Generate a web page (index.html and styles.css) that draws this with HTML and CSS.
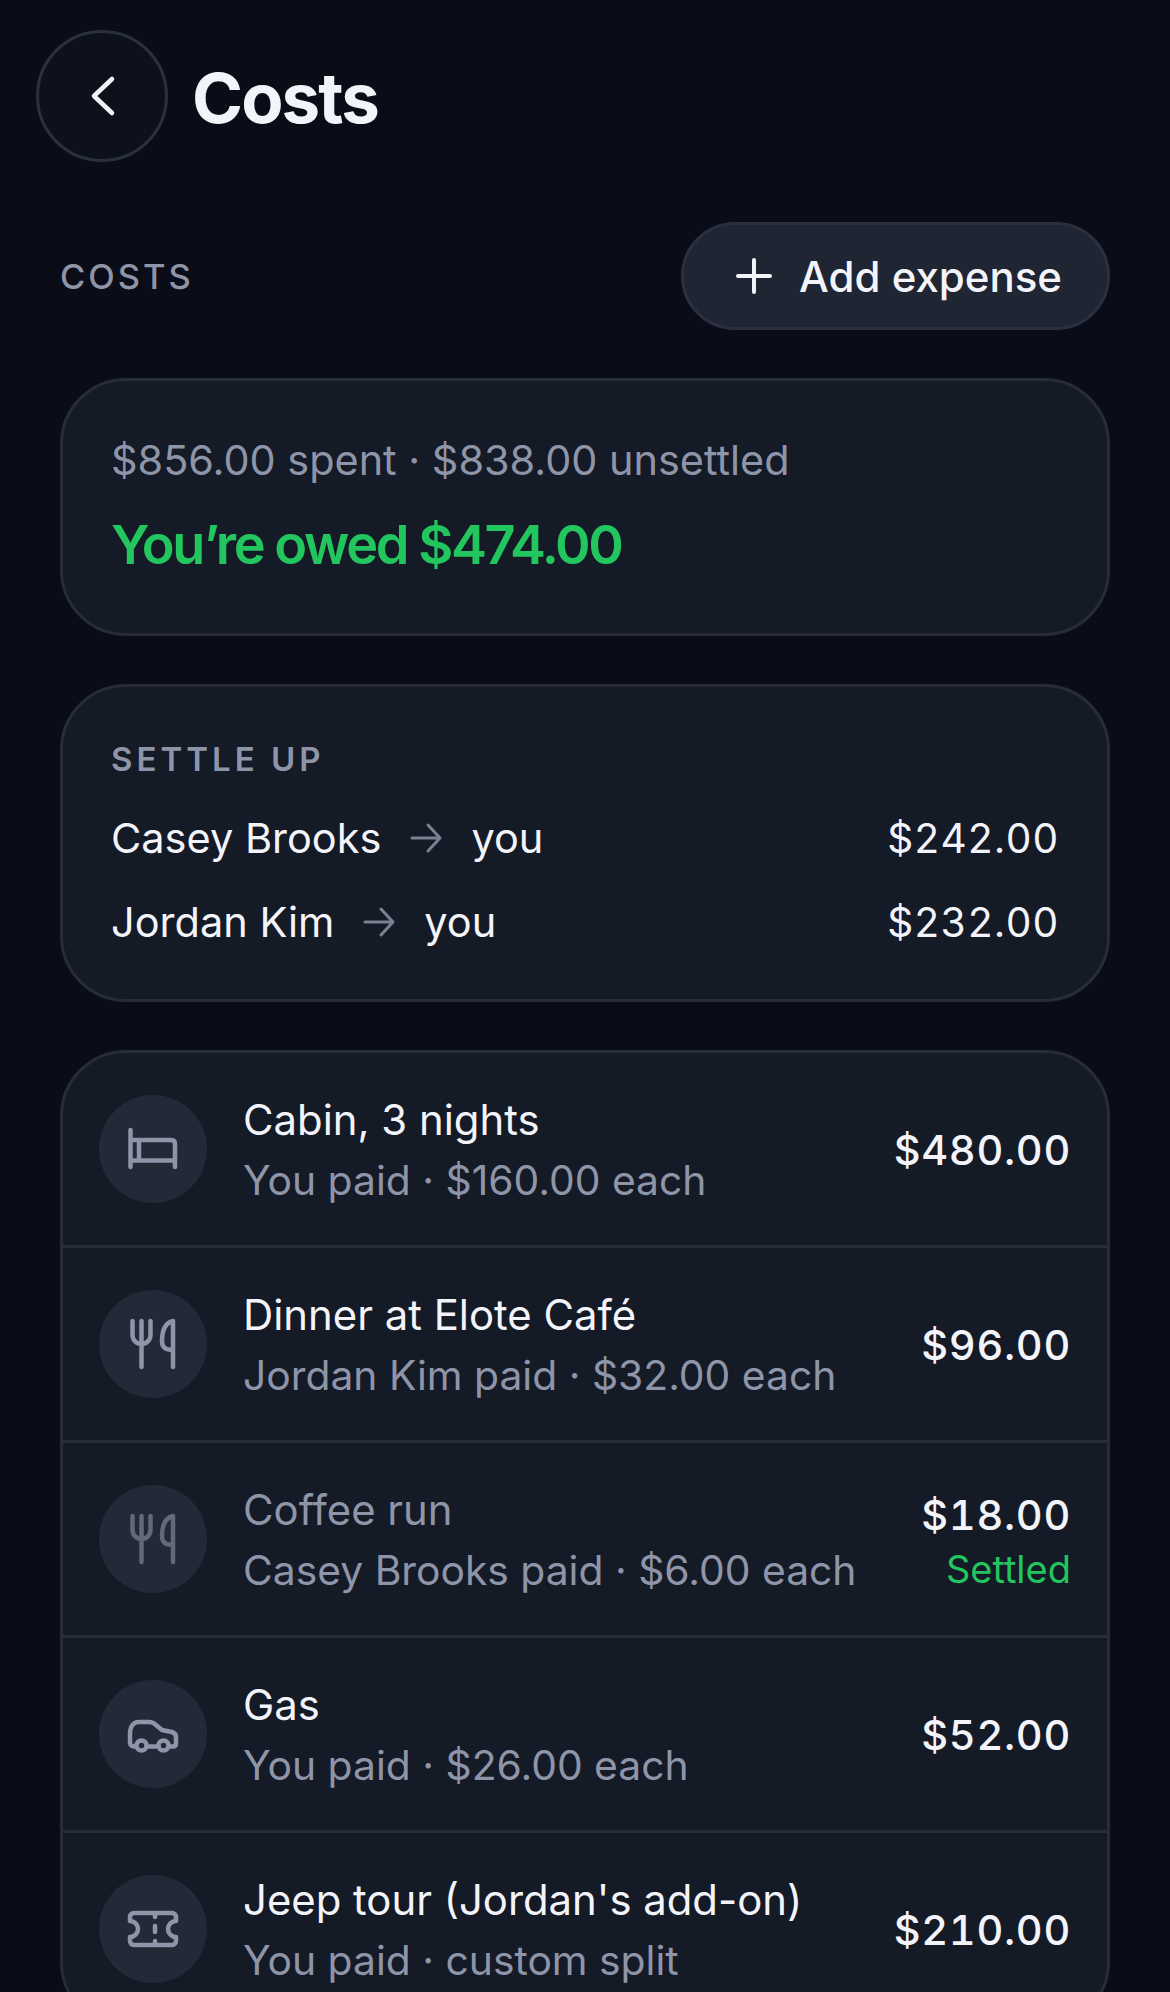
FILE: index.html
```html
<!DOCTYPE html>
<html lang="en">
<head>
  <meta charset="UTF-8">
  <meta name="viewport" content="width=device-width, initial-scale=1.0">
  <title>Costs</title>
  <link rel="stylesheet" href="styles.css">
</head>
<body>
  <div class="page">
    <header class="top-bar">
      <button class="back-btn">
        <svg width="60" height="60" viewBox="0 0 60 60"><path d="M40 13 L22 30 L40 47"/></svg>
      </button>
      <h1 class="page-title">Costs</h1>
    </header>

    <main class="content">
      <div class="section-head">
        <span class="eyebrow">COSTS</span>
        <button class="add-btn">
          <svg width="48" height="48" viewBox="0 0 48 48"><path d="M24 8 V40 M8 24 H40"/></svg>
          Add expense
        </button>
      </div>

      <section class="card summary">
        <div class="summary-line">$856.00 spent · $838.00 unsettled</div>
        <div class="summary-owed">You’re owed $474.00</div>
      </section>

      <section class="card settle">
        <div class="settle-label">SETTLE UP</div>
        <div class="settle-row">
          <span>Casey Brooks</span>
          <svg class="arrow" width="36" height="36" viewBox="0 0 36 36"><path d="M4 18 H32 M20 5 L32 18 L20 31"/></svg>
          <span>you</span>
          <span class="settle-amt">$242.00</span>
        </div>
        <div class="settle-row">
          <span>Jordan Kim</span>
          <svg class="arrow" width="36" height="36" viewBox="0 0 36 36"><path d="M4 18 H32 M20 5 L32 18 L20 31"/></svg>
          <span>you</span>
          <span class="settle-amt">$232.00</span>
        </div>
      </section>

      <section class="card expenses">
        <div class="expense">
          <div class="exp-icon">
            <svg width="60" height="60" viewBox="0 0 60 60"><path d="M7.5 11 V48 M7.5 41.5 H52 M52 48 V25 Q52 21 48 21 H7.5 M16 21 V41.5"/></svg>
          </div>
          <div class="exp-text">
            <div class="exp-name">Cabin, 3 nights</div>
            <div class="exp-meta">You paid · $160.00 each</div>
          </div>
          <div class="exp-right"><div class="exp-amt">$480.00</div></div>
        </div>

        <div class="expense">
          <div class="exp-icon">
            <svg width="60" height="60" viewBox="0 0 60 60"><path d="M9.5 7 V21 A9 9 0 0 0 27.5 21 V7 M18.5 7 V53 M50 7 V53 M50 7 C42 9 39 16 39 27 C39 33 42 36 50 36"/></svg>
          </div>
          <div class="exp-text">
            <div class="exp-name">Dinner at Elote Café</div>
            <div class="exp-meta">Jordan Kim paid · $32.00 each</div>
          </div>
          <div class="exp-right"><div class="exp-amt">$96.00</div></div>
        </div>

        <div class="expense is-settled">
          <div class="exp-icon">
            <svg width="60" height="60" viewBox="0 0 60 60"><path d="M9.5 7 V21 A9 9 0 0 0 27.5 21 V7 M18.5 7 V53 M50 7 V53 M50 7 C42 9 39 16 39 27 C39 33 42 36 50 36"/></svg>
          </div>
          <div class="exp-text">
            <div class="exp-name">Coffee run</div>
            <div class="exp-meta">Casey Brooks paid · $6.00 each</div>
          </div>
          <div class="exp-right">
            <div class="exp-amt">$18.00</div>
            <div class="exp-status">Settled</div>
          </div>
        </div>

        <div class="expense">
          <div class="exp-icon">
            <svg width="60" height="60" viewBox="0 0 60 60">
              <path d="M13 42.5 H11 A4 4 0 0 1 7 38.5 V30 C7 23 10 18 16 18 H26 C29 18 31 19 33 21 L39 26 L49 28 C52 29 53 31 53 33 V39 C53 41.5 52 42.5 50 42.5 H46 M35.5 42.5 H23.5"/>
              <circle cx="18.5" cy="41.5" r="5"/>
              <circle cx="40.5" cy="41.5" r="5"/>
            </svg>
          </div>
          <div class="exp-text">
            <div class="exp-name">Gas</div>
            <div class="exp-meta">You paid · $26.00 each</div>
          </div>
          <div class="exp-right"><div class="exp-amt">$52.00</div></div>
        </div>

        <div class="expense">
          <div class="exp-icon">
            <svg width="60" height="60" viewBox="0 0 60 60"><path d="M11 14 H49 A4 4 0 0 1 53 18 V22 A8 8 0 0 0 53 38 V42 A4 4 0 0 1 49 46 H11 A4 4 0 0 1 7 42 V38 A8 8 0 0 0 7 22 V18 A4 4 0 0 1 11 14 Z M32 14 V18 M32 27 V33 M32 42 V46"/></svg>
          </div>
          <div class="exp-text">
            <div class="exp-name">Jeep tour (Jordan's add-on)</div>
            <div class="exp-meta">You paid · custom split</div>
          </div>
          <div class="exp-right"><div class="exp-amt">$210.00</div></div>
        </div>
      </section>
    </main>
  </div>
</body>
</html>
```

FILE: styles.css
```css
body {
  margin: 0;
  padding: 0;
  background-color: #0a0d17;
  font-family: Inter, "Liberation Sans", sans-serif;
  color: #f3f4fa;
}

.page {
  height: 1992px;
  overflow: hidden;
}

svg {
  display: block;
  fill: none;
  stroke: currentColor;
  stroke-width: 4;
  stroke-linecap: round;
  stroke-linejoin: round;
}

.top-bar {
  display: flex;
  align-items: center;
  gap: 24px;
  padding: 30px 36px 0;
}

.back-btn {
  width: 132px;
  height: 132px;
  display: flex;
  align-items: center;
  justify-content: center;
  padding: 0;
  color: #f3f4fa;
  background-color: #0d111b;
  border: 3px solid #2a303e;
  border-radius: 50%;
}

.back-btn svg {
  stroke-width: 4.5;
}

.page-title {
  margin: 0;
  padding-top: 3px;
  font-size: 69px;
  font-weight: 700;
  letter-spacing: -1.9px;
  line-height: 80px;
}

.content {
  padding: 60px 60px 0;
}

.section-head {
  display: flex;
  align-items: center;
  justify-content: space-between;
  margin-bottom: 48px;
}

.eyebrow {
  font-size: 34.5px;
  font-weight: 500;
  letter-spacing: 3px;
  color: #8f95a8;
}

.add-btn {
  display: flex;
  align-items: center;
  gap: 21px;
  height: 108px;
  padding: 0 45px 0 46px;
  font-family: inherit;
  font-size: 42px;
  font-weight: 500;
  color: #f3f4fa;
  background-color: #1f2532;
  border: 3px solid #2a3040;
  border-radius: 54px;
}

.card {
  margin-bottom: 48px;
  background-color: #141a26;
  border: 3px solid #262c3a;
  border-radius: 66px;
}

.summary {
  height: 258px;
  box-sizing: border-box;
  padding: 49px 48px 0;
}

.summary-line {
  font-size: 41.4px;
  line-height: 60px;
  color: #8f95a8;
}

.summary-owed {
  margin-top: 19px;
  font-size: 54px;
  font-weight: 600;
  letter-spacing: -2.4px;
  line-height: 72px;
  color: #22c55e;
}

.settle {
  height: 318px;
  box-sizing: border-box;
  padding: 48px 48px 0;
}

.settle-label {
  font-size: 33px;
  font-weight: 600;
  letter-spacing: 4px;
  line-height: 48px;
  color: #8f95a8;
  margin-bottom: 13px;
}

.settle-row {
  display: flex;
  align-items: center;
  gap: 27px;
  height: 84px;
  font-size: 41.5px;
}

.arrow {
  stroke-width: 3;
  color: #7b8192;
}

.settle-amt {
  margin-left: auto;
  font-size: 40.5px;
  font-weight: 400;
  font-variant-numeric: tabular-nums;
  letter-spacing: 0.5px;
}

.expenses {
  overflow: hidden;
}

.expense {
  display: flex;
  align-items: center;
  height: 192px;
  padding: 0 36px;
  border-bottom: 3px solid #262c3a;
}

.expense:last-child {
  border-bottom: none;
}

.exp-icon {
  flex: none;
  display: flex;
  align-items: center;
  justify-content: center;
  width: 108px;
  height: 108px;
  margin-right: 36px;
  color: #8f95a8;
  background-color: #232936;
  border-radius: 50%;
}

.exp-icon svg {
  stroke-width: 4.5;
}

.exp-text {
  flex: 1;
  padding-top: 2px;
}

.exp-name {
  font-size: 41.85px;
  line-height: 60px;
}

.exp-meta {
  font-size: 40.8px;
  line-height: 60px;
  color: #8f95a8;
}

.exp-right {
  text-align: right;
  padding-top: 2px;
}

.exp-amt {
  font-size: 41.5px;
  font-weight: 500;
  font-variant-numeric: tabular-nums;
  letter-spacing: 0.7px;
}

.exp-status {
  margin-top: 6px;
  font-size: 38px;
  font-weight: 400;
  color: #22c55e;
}

.is-settled .exp-name {
  color: #8f95a8;
}

.is-settled .exp-right {
  padding-top: 4px;
}

.is-settled .exp-icon svg {
  opacity: 0.6;
}
```
